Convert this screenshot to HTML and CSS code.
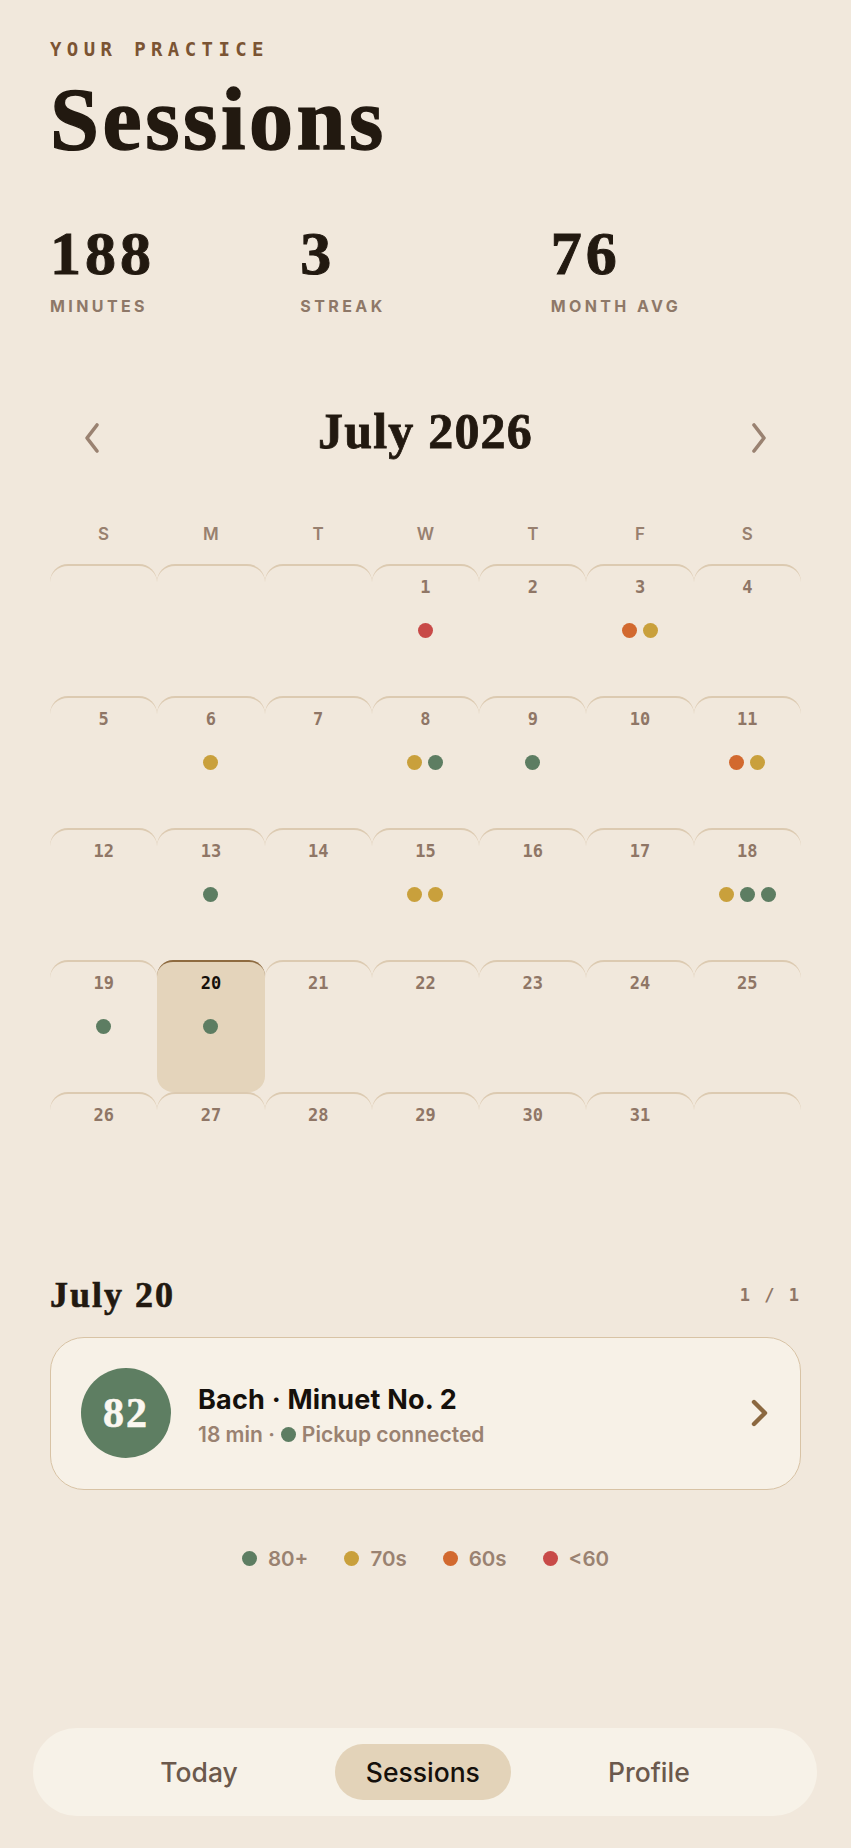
FILE: index.html
```html
<!DOCTYPE html>
<html lang="en">
<head>
<meta charset="utf-8">
<title>Sessions</title>
<link rel="stylesheet" href="styles.css">
</head>
<body>
<div class="screen">
  <main class="content">
    <div class="eyebrow">YOUR PRACTICE</div>
    <h1 class="title">Sessions</h1>

    <section class="stats">
      <div class="stat"><div class="stat-num">188</div><div class="stat-label">MINUTES</div></div>
      <div class="stat"><div class="stat-num">3</div><div class="stat-label">STREAK</div></div>
      <div class="stat"><div class="stat-num">76</div><div class="stat-label">MONTH AVG</div></div>
    </section>

    <section class="month-head">
      <button class="nav-arrow" aria-label="Previous month">
        <svg width="18" height="32" viewBox="0 0 18 32"><polyline points="14,3 4,16 14,29" fill="none" stroke="#9a8271" stroke-width="3.6" stroke-linecap="round" stroke-linejoin="round"/></svg>
      </button>
      <h2 class="month-title">July 2026</h2>
      <button class="nav-arrow" aria-label="Next month">
        <svg width="18" height="32" viewBox="0 0 18 32"><polyline points="4,3 14,16 4,29" fill="none" stroke="#9a8271" stroke-width="3.6" stroke-linecap="round" stroke-linejoin="round"/></svg>
      </button>
    </section>

    <div class="weekdays">
      <span>S</span><span>M</span><span>T</span><span>W</span><span>T</span><span>F</span><span>S</span>
    </div>

    <div class="calendar">
      <div class="day"></div>
      <div class="day"></div>
      <div class="day"></div>
      <div class="day"><span class="num">1</span><span class="dots"><i class="dot red"></i></span></div>
      <div class="day"><span class="num">2</span></div>
      <div class="day"><span class="num">3</span><span class="dots"><i class="dot orange"></i><i class="dot gold"></i></span></div>
      <div class="day"><span class="num">4</span></div>

      <div class="day"><span class="num">5</span></div>
      <div class="day"><span class="num">6</span><span class="dots"><i class="dot gold"></i></span></div>
      <div class="day"><span class="num">7</span></div>
      <div class="day"><span class="num">8</span><span class="dots"><i class="dot gold"></i><i class="dot green"></i></span></div>
      <div class="day"><span class="num">9</span><span class="dots"><i class="dot green"></i></span></div>
      <div class="day"><span class="num">10</span></div>
      <div class="day"><span class="num">11</span><span class="dots"><i class="dot orange"></i><i class="dot gold"></i></span></div>

      <div class="day"><span class="num">12</span></div>
      <div class="day"><span class="num">13</span><span class="dots"><i class="dot green"></i></span></div>
      <div class="day"><span class="num">14</span></div>
      <div class="day"><span class="num">15</span><span class="dots"><i class="dot gold"></i><i class="dot gold"></i></span></div>
      <div class="day"><span class="num">16</span></div>
      <div class="day"><span class="num">17</span></div>
      <div class="day"><span class="num">18</span><span class="dots"><i class="dot gold"></i><i class="dot green"></i><i class="dot green"></i></span></div>

      <div class="day"><span class="num">19</span><span class="dots"><i class="dot green"></i></span></div>
      <div class="day selected"><span class="num">20</span><span class="dots"><i class="dot green"></i></span></div>
      <div class="day"><span class="num">21</span></div>
      <div class="day"><span class="num">22</span></div>
      <div class="day"><span class="num">23</span></div>
      <div class="day"><span class="num">24</span></div>
      <div class="day"><span class="num">25</span></div>

      <div class="day"><span class="num">26</span></div>
      <div class="day"><span class="num">27</span></div>
      <div class="day"><span class="num">28</span></div>
      <div class="day"><span class="num">29</span></div>
      <div class="day"><span class="num">30</span></div>
      <div class="day"><span class="num">31</span></div>
      <div class="day"></div>
    </div>

    <section class="day-head">
      <h3 class="day-title">July 20</h3>
      <span class="pager">1 / 1</span>
    </section>

    <article class="session-card">
      <div class="score">82</div>
      <div class="session-info">
        <div class="session-title">Bach · Minuet No. 2</div>
        <div class="session-meta">18 min · <i class="dot green"></i> Pickup connected</div>
      </div>
      <svg class="card-chevron" width="20" height="28" viewBox="0 0 20 28"><polyline points="4,3 15,14 4,25" fill="none" stroke="#8b6840" stroke-width="4.4" stroke-linecap="round" stroke-linejoin="round"/></svg>
    </article>

    <div class="legend">
      <span class="legend-item"><i class="dot green"></i>80+</span>
      <span class="legend-item"><i class="dot gold"></i>70s</span>
      <span class="legend-item"><i class="dot orange"></i>60s</span>
      <span class="legend-item"><i class="dot red"></i>&lt;60</span>
    </div>
  </main>

  <nav class="tabbar">
    <a class="tab">Today</a>
    <a class="tab active">Sessions</a>
    <a class="tab">Profile</a>
  </nav>
</div>
</body>
</html>
```

FILE: styles.css
```css
* { box-sizing: border-box; }

html, body {
  margin: 0;
  padding: 0;
  background: #f1e8dc;
}

.screen {
  padding: 37px 0 32px;
}

.content {
  padding: 0 50px;
}

.eyebrow {
  font-family: "DejaVu Sans Mono", "Liberation Mono", monospace;
  font-weight: 700;
  font-size: 19px;
  line-height: 24px;
  letter-spacing: 5.4px;
  color: #7b5433;
}

.title {
  margin: 15.3px 0 0;
  font-family: "Liberation Serif", serif;
  font-weight: 700;
  font-size: 88px;
  line-height: 88px;
  letter-spacing: 3.6px;
  color: #221910;
  -webkit-text-stroke: 1.4px #221910;
}

.stats {
  margin-top: 57px;
  display: grid;
  grid-template-columns: repeat(3, 1fr);
}

.stat-num {
  font-family: "Liberation Serif", serif;
  font-weight: 700;
  font-size: 62px;
  line-height: 64px;
  letter-spacing: 4px;
  color: #221910;
  -webkit-text-stroke: 1px #221910;
}

.stat-label {
  margin-top: 12px;
  font-family: Inter, "Liberation Sans", sans-serif;
  font-weight: 700;
  font-size: 16px;
  line-height: 18px;
  letter-spacing: 3.4px;
  color: #8e7868;
}

.month-head {
  margin-top: 88px;
  height: 56px;
  display: flex;
  align-items: center;
  justify-content: space-between;
  padding: 0 20px;
}

.nav-arrow {
  width: 44px;
  height: 44px;
  margin-top: 14px;
  border: 0;
  padding: 0;
  background: none;
  display: flex;
  align-items: center;
  justify-content: center;
}

.month-title {
  margin: 0;
  font-family: "Liberation Serif", serif;
  font-weight: 700;
  font-size: 50px;
  line-height: 56px;
  letter-spacing: 1.2px;
  color: #221910;
  -webkit-text-stroke: 0.8px #221910;
}

.weekdays {
  margin-top: 65px;
  display: grid;
  grid-template-columns: repeat(7, 1fr);
  font-family: Inter, "Liberation Sans", sans-serif;
  font-weight: 600;
  font-size: 17px;
  line-height: 20px;
  color: #98806f;
  text-align: center;
}

.calendar {
  margin-top: 19.4px;
  display: grid;
  grid-template-columns: repeat(7, 1fr);
  grid-auto-rows: 132px;
}

.day {
  display: flex;
  flex-direction: column;
  align-items: center;
  padding-top: 11px;
  border-top: 2px solid #dccab1;
  border-radius: 18px 18px 0 0;
}

.day.selected {
  background: #e4d4bb;
  border-top-color: #8e6b40;
  border-radius: 16px;
}

.num {
  font-family: "DejaVu Sans Mono", "Liberation Mono", monospace;
  font-weight: 700;
  font-size: 17px;
  line-height: 20px;
  color: #8f7666;
}

.selected .num {
  color: #15100b;
}

.dots {
  margin-top: 26.5px;
  display: flex;
  gap: 6px;
}

.dot {
  display: inline-block;
  width: 15px;
  height: 15px;
  border-radius: 50%;
}

.dot.green { background: #5d7d62; }
.dot.gold { background: #c9a03c; }
.dot.orange { background: #d2692f; }
.dot.red { background: #c84a48; }

.day-head {
  margin-top: 51.5px;
  height: 40px;
  display: flex;
  align-items: center;
  justify-content: space-between;
}

.day-title {
  margin: 0;
  font-family: "Liberation Serif", serif;
  font-weight: 700;
  font-size: 36px;
  line-height: 40px;
  letter-spacing: 2px;
  color: #221910;
  -webkit-text-stroke: 0.6px #221910;
}

.pager {
  font-family: "DejaVu Sans Mono", "Liberation Mono", monospace;
  font-weight: 700;
  font-size: 17px;
  letter-spacing: 2px;
  color: #8f7666;
}

.session-card {
  margin-top: 21.5px;
  height: 153px;
  display: flex;
  align-items: center;
  padding: 0 30px;
  background: #f7f1e7;
  border: 1.5px solid #d8c3a5;
  border-radius: 34px;
}

.score {
  flex: none;
  width: 90px;
  height: 90px;
  border-radius: 50%;
  background: #5e7e62;
  color: #fbf7f0;
  display: flex;
  align-items: center;
  justify-content: center;
  font-family: "Liberation Serif", serif;
  font-weight: 700;
  font-size: 42px;
  letter-spacing: 2px;
  -webkit-text-stroke: 0.6px #fbf7f0;
}

.session-info {
  flex: 1;
  margin-left: 27px;
  margin-top: 5px;
  display: flex;
  flex-direction: column;
  gap: 8px;
}

.session-title {
  font-family: Inter, "Liberation Sans", sans-serif;
  font-weight: 700;
  font-size: 27px;
  line-height: 30px;
  letter-spacing: 0.2px;
  color: #15100b;
}

.session-meta {
  display: flex;
  align-items: center;
  gap: 6px;
  font-family: Inter, "Liberation Sans", sans-serif;
  font-weight: 600;
  font-size: 21px;
  line-height: 24px;
  color: #9a8271;
}

.card-chevron {
  flex: none;
}

.legend {
  margin-top: 57px;
  display: flex;
  justify-content: center;
  gap: 36px;
  font-family: Inter, "Liberation Sans", sans-serif;
  font-weight: 600;
  font-size: 20.5px;
  line-height: 24px;
  color: #9a8271;
}

.legend-item {
  display: flex;
  align-items: center;
  gap: 11px;
}

.tabbar {
  margin: 157px 34px 0 33px;
  height: 88px;
  border-radius: 44px;
  background: #f7f2e8;
  display: flex;
  align-items: center;
  justify-content: center;
  gap: 66px;
}

.tab {
  height: 56px;
  padding: 0 31px;
  border-radius: 28px;
  display: flex;
  align-items: center;
  font-family: Inter, "Liberation Sans", sans-serif;
  font-weight: 500;
  font-size: 26.5px;
  color: #6b594c;
}

.tab.active {
  background: #e3d3b9;
  color: #15100b;
}
```
